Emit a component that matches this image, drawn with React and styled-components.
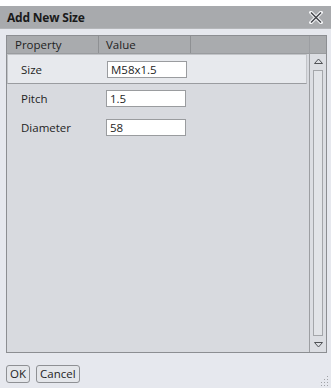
import React from "react";
import styled, { createGlobalStyle } from "styled-components";

const Global = createGlobalStyle`
  html, body { margin: 0; padding: 0; }
  body { background: #ffffff; font-family: "Open Sans", "Noto Sans", sans-serif; }
`;

const Window = styled.div`
  width: 331px;
  height: 388px;
  display: flex;
  flex-direction: column;
  background: #ffffff;
`;

const TopStrip = styled.div`
  height: 6px;
  background: #ffffff;
`;

const TitleBar = styled.div`
  height: 22px;
  background: #a8aaad;
  display: flex;
  align-items: center;
  justify-content: space-between;
  padding: 0 8px 0 7px;
  border-bottom: 1px solid #b4b6b9;
`;

const Title = styled.span`
  font-size: 12px;
  font-weight: 700;
  color: #1a1a1a;
  letter-spacing: -0.2px;
`;

const Body = styled.div`
  flex: 1;
  background: #e6e8ee;
  display: flex;
  flex-direction: column;
  padding: 6px 4px 0 6px;
  position: relative;
`;

const Grid = styled.div`
  height: 316px;
  border: 1px solid #8c8e92;
  display: flex;
  background: #d8dadf;
`;

const GridMain = styled.div`
  flex: 1;
  display: flex;
  flex-direction: column;
`;

const HeaderRow = styled.div`
  height: 17px;
  background: #a9abae;
  display: flex;
  border-bottom: 1px solid #9a9c9f;
`;

const HeaderCell = styled.div`
  width: ${(p) => p.$w}px;
  padding-left: ${(p) => p.$pl}px;
  box-sizing: border-box;
  font-size: 11.5px;
  color: #1e1e1e;
  display: flex;
  align-items: center;
  border-right: ${(p) => (p.$last ? "none" : "1px solid #8e9093")};
  flex: ${(p) => (p.$last ? 1 : "none")};
`;

const Row = styled.div`
  height: ${(p) => (p.$selected ? 30 : 29)}px;
  display: flex;
  align-items: center;
  box-sizing: border-box;
  background: ${(p) => (p.$selected ? "#e7e9ed" : "transparent")};
  border: ${(p) => (p.$selected ? "1px solid #c2c4c8" : "none")};
  border-bottom: ${(p) => (p.$selected ? "1px solid #9a9ca0" : "none")};
  margin-right: ${(p) => (p.$selected ? 2 : 0)}px;
`;

const Label = styled.div`
  width: 99px;
  padding-left: ${(p) => (p.$selected ? 13 : 14)}px;
  box-sizing: border-box;
  font-size: 11.5px;
  color: #1e1e1e;
`;

const Input = styled.input`
  width: 80px;
  height: 17px;
  box-sizing: border-box;
  border: 1px solid #9a9c9f;
  background: #ffffff;
  font-family: inherit;
  font-size: 11.5px;
  color: #1e1e1e;
  padding: 0 0 0 3px;
  outline: none;
  margin: 0;
`;

const Scrollbar = styled.div`
  width: 16px;
  border-left: 1px solid #9c9ea2;
  background: #dcdee3;
  display: flex;
  flex-direction: column;
  align-items: center;
`;

const ScrollHead = styled.div`
  height: 17px;
  width: 100%;
  background: #a9abae;
  border-bottom: 1px solid #9a9c9f;
`;

const Arrow = styled.div`
  height: 14px;
  display: flex;
  align-items: center;
  justify-content: center;
`;

const Thumb = styled.div`
  width: 10px;
  flex: 1;
  border: 1px solid #a4a6aa;
  background: #e2e4e8;
  margin: 2px 0;
  box-sizing: border-box;
`;

const Footer = styled.div`
  display: flex;
  gap: 6px;
  padding-top: 12px;
`;

const Button = styled.button`
  height: 18px;
  padding: 0 ${(p) => p.$px}px;
  border: 1px solid #8e9094;
  border-radius: 3px;
  background: #e4e6ea;
  font-family: inherit;
  font-size: 11.5px;
  color: #1e1e1e;
  line-height: 14px;
  margin: 0;
`;

const Grip = styled.svg`
  position: absolute;
  right: 2px;
  bottom: 2px;
`;

const rows = [
  { label: "Size", value: "M58x1.5", selected: true },
  { label: "Pitch", value: "1.5" },
  { label: "Diameter", value: "58" },
];

export default function App() {
  return (
    <Window>
      <Global />
      <TopStrip />
      <TitleBar>
        <Title>Add New Size</Title>
        <svg width="14" height="13" viewBox="0 0 14 13">
          <path d="M2 1.5 L12 11.5 M12 1.5 L2 11.5" stroke="#f4f5f7" strokeWidth="3.6" strokeLinecap="square" />
          <path d="M2 1.5 L12 11.5 M12 1.5 L2 11.5" stroke="#45474b" strokeWidth="1.5" />
        </svg>
      </TitleBar>
      <Body>
        <Grid>
          <GridMain>
            <HeaderRow>
              <HeaderCell $w={92} $pl={8}>Property</HeaderCell>
              <HeaderCell $w={92} $pl={7}>Value</HeaderCell>
              <HeaderCell $last $pl={0} />
            </HeaderRow>
            {rows.map((r) => (
              <Row key={r.label} $selected={r.selected}>
                <Label $selected={r.selected}>{r.label}</Label>
                <Input defaultValue={r.value} />
              </Row>
            ))}
          </GridMain>
          <Scrollbar>
            <ScrollHead />
            <Arrow>
              <svg width="9" height="6" viewBox="0 0 9 6">
                <path d="M0.5 5.5 L4.5 1 L8.5 5.5 Z" fill="none" stroke="#505256" strokeWidth="1" />
              </svg>
            </Arrow>
            <Thumb />
            <Arrow>
              <svg width="9" height="6" viewBox="0 0 9 6">
                <path d="M0.5 0.5 L4.5 5 L8.5 0.5 Z" fill="none" stroke="#505256" strokeWidth="1" />
              </svg>
            </Arrow>
          </Scrollbar>
        </Grid>
        <Footer>
          <Button $px={3}>OK</Button>
          <Button $px={3}>Cancel</Button>
        </Footer>
        <Grip width="10" height="10" viewBox="0 0 10 10">
          {[[8, 0], [8, 3], [8, 6], [8, 9], [5, 3], [5, 6], [5, 9], [2, 6], [2, 9]].map(([x, y], i) => (
            <rect key={i} x={x} y={y} width="1" height="1" fill="#a0a2a6" />
          ))}
        </Grip>
      </Body>
    </Window>
  );
}
